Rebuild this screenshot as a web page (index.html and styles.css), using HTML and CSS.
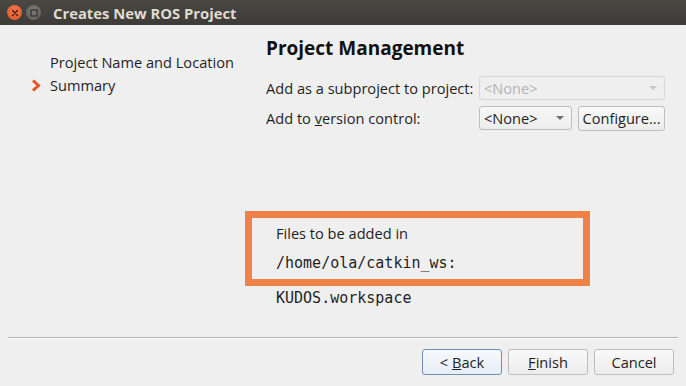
FILE: index.html
```html
<!DOCTYPE html>
<html lang="en">
<head>
    <meta charset="UTF-8">
    <title>Creates New ROS Project</title>
    <link rel="stylesheet" href="styles.css">
</head>
<body>

<div class="window">
    <div class="titlebar">
        <span class="win-btn close">
            <svg width="8" height="8" viewBox="0 0 8 8"><path d="M1.5 1.5 L6.5 6.5 M6.5 1.5 L1.5 6.5" stroke="#3a1a0e" stroke-width="1.3" stroke-linecap="round"/></svg>
        </span>
        <span class="win-btn minimize">
            <svg width="8" height="8" viewBox="0 0 8 8"><rect x="1" y="1" width="6" height="6" fill="none" stroke="#2f2f2d" stroke-width="1.2"/></svg>
        </span>
        <span class="title">Creates New ROS Project</span>
    </div>

    <div class="content">
        <ul class="steps">
            <li>Project Name and Location</li>
            <li class="current">
                <svg class="arrow" width="10" height="13" viewBox="0 0 10 13"><path d="M2 1.5 L7.5 6.5 L2 11.5" fill="none" stroke="#e0561c" stroke-width="3" stroke-linejoin="miter"/></svg>
                Summary
            </li>
        </ul>

        <div class="page">
            <h1>Project Management</h1>

            <div class="form-row">
                <label>Add as a subproject to project:</label>
                <div class="combo wide disabled">
                    <span>&lt;None&gt;</span>
                    <span class="caret"></span>
                </div>
            </div>
            <div class="form-row">
                <label>Add to <u>v</u>ersion control:</label>
                <div class="combo">
                    <span>&lt;None&gt;</span>
                    <span class="caret"></span>
                </div>
                <button class="btn configure">Configure...</button>
            </div>

            <div class="files">
                <div class="highlight">
                    <p>Files to be added in</p>
                    <p class="mono">/home/ola/catkin_ws:</p>
                </div>
                <p class="mono file">KUDOS.workspace</p>
            </div>
        </div>
    </div>

    <div class="footer">
        <button class="btn default">&lt; <u>B</u>ack</button>
        <button class="btn"><u>F</u>inish</button>
        <button class="btn">Cancel</button>
    </div>
</div>

</body>
</html>
```

FILE: styles.css
```css
body {
    margin: 0;
    font-family: "Open Sans", "DejaVu Sans", sans-serif;
    font-size: 14.6px;
    color: #1f1f1f;
    background-color: #efefef;
}

.window {
    width: 686px;
    height: 386px;
    display: flex;
    flex-direction: column;
    background-color: #efefef;
}

.titlebar {
    height: 25px;
    display: flex;
    align-items: center;
    padding-left: 7px;
    background: linear-gradient(#494843, #3c3b37);
    box-sizing: border-box;
}

.win-btn {
    width: 15px;
    height: 15px;
    border-radius: 50%;
    display: flex;
    align-items: center;
    justify-content: center;
    margin-right: 4px;
}

.win-btn.close {
    background: radial-gradient(circle at 50% 40%, #f7784a, #e0531f);
}

.win-btn.minimize {
    background: radial-gradient(circle at 50% 40%, #7d7c77, #5c5b57);
}

.title {
    margin-left: 8px;
    color: #dfdbd2;
    font-weight: bold;
    font-size: 14.8px;
}

.content {
    flex: 1;
    display: flex;
}

.steps {
    list-style: none;
    margin: 0;
    padding: 26px 0 0 50px;
    width: 216px;
}

.steps li {
    height: 23px;
    line-height: 23px;
    position: relative;
}

.steps .arrow {
    position: absolute;
    left: -19px;
    top: 5px;
}

.page {
    flex: 1;
    padding-top: 10px;
}

.page h1 {
    margin: 0 0 15px;
    font-size: 19px;
    line-height: 26px;
    font-weight: bold;
    color: #111;
}

.form-row {
    display: flex;
    align-items: center;
    height: 24px;
    margin-bottom: 6px;
}

.form-row label {
    width: 213px;
}

.combo {
    width: 93px;
    height: 24px;
    box-sizing: border-box;
    border: 1px solid #bdbdbb;
    border-radius: 3px;
    background: linear-gradient(#f7f7f7, #ededed);
    display: flex;
    align-items: center;
    justify-content: space-between;
    padding: 0 7px 0 4px;
}

.combo.wide {
    width: 186px;
}

.combo.disabled {
    color: #b3b3b3;
    border-color: #d6d6d4;
    background: #efefef;
}

.caret {
    width: 0;
    height: 0;
    border-left: 4px solid transparent;
    border-right: 4px solid transparent;
    border-top: 4px solid #6f6f6f;
}

.combo.disabled .caret {
    border-top-color: #c6c6c6;
}

.btn {
    font-family: inherit;
    font-size: 14.6px;
    color: #1f1f1f;
    height: 26px;
    width: 80px;
    box-sizing: border-box;
    border: 1px solid #bdbdbb;
    border-radius: 3px;
    background: linear-gradient(#f9f9f9, #ececec);
    padding: 0;
}

.btn.configure {
    width: 87px;
    height: 25px;
    margin-left: 6px;
}

.files {
    margin-top: 81px;
    margin-left: -21px;
}

.highlight {
    width: 345px;
    height: 75px;
    box-sizing: border-box;
    border: 7px solid #ef8247;
    padding: 0 0 0 24px;
}

.files p {
    margin: 0;
    line-height: 30px;
}

.mono {
    font-family: "DejaVu Sans Mono", monospace;
    font-size: 15px;
}

.files .file {
    padding-left: 31px;
    line-height: 25px;
}

.footer {
    margin: 0 8px;
    border-top: 1px solid #b2b2b2;
    box-shadow: inset 0 1px 0 #ffffff;
    height: 48px;
    display: flex;
    justify-content: flex-end;
    align-items: center;
    gap: 6px;
    padding-right: 4px;
}

.btn.default {
    border-color: #6d8fb4;
    background: linear-gradient(#f7fafd, #e6edf4);
}
```
